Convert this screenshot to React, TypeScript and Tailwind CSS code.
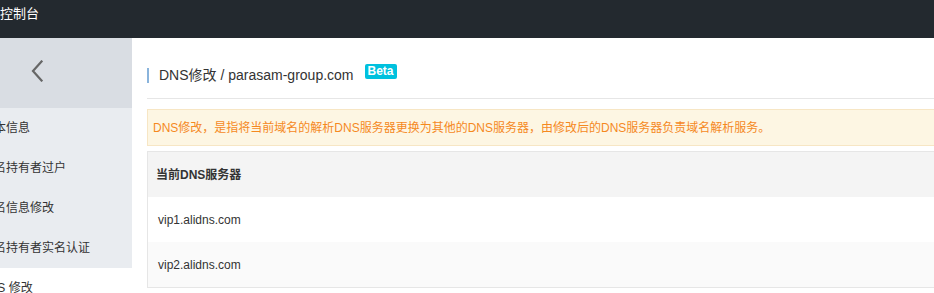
import React from "react";

const menu = ["基本信息", "域名持有者过户", "域名信息修改", "域名持有者实名认证"];

function Chevron() {
  return (
    <svg width="12" height="22" viewBox="0 0 12 22" fill="none">
      <path d="M10.5 1.5 L2 11 L10.5 20.5" stroke="#666" strokeWidth="2.2" strokeLinecap="square" />
    </svg>
  );
}

export default function App() {
  return (
    <div className="w-[934px] h-[293px] overflow-hidden bg-white font-['Liberation_Sans','Noto_Sans_CJK_SC',sans-serif] text-[#333]">
      {/* top bar */}
      <header className="h-[38px] bg-[#23292f] text-white text-[13px] leading-none pt-[7px]">控制台</header>

      <div className="flex">
        {/* sidebar */}
        <aside className="w-[132px] shrink-0 overflow-hidden">
          <div className="h-[70px] bg-[#d9dde3] flex items-center pl-[31px] pb-[5px]">
            <Chevron />
          </div>
          <ul className="bg-[#e9ecf0]">
            {menu.map((m) => (
              <li key={m} className="h-[40px] flex items-center text-[12px] whitespace-nowrap">
                <span className="-ml-[18px]">{m}</span>
              </li>
            ))}
          </ul>
          <div className="h-[40px] flex items-center text-[12px] whitespace-nowrap bg-white">
            <span className="-ml-[20px]">DNS 修改</span>
          </div>
        </aside>

        {/* main */}
        <main className="w-[900px] shrink-0 pl-[15px]">
          <div className="h-[61px] border-b border-[#e6e6e6] flex items-center pt-[14px]">
            <span className="border-l-2 border-[#8ab4dc] pl-[10px] h-[15px] leading-[15px] text-[14px] text-[#333]">
              DNS修改 / parasam-group.com
            </span>
            <span className="ml-[11px] mb-[7px] h-[15px] px-[3px] rounded-[2px] bg-[#00c1de] text-white text-[12px] font-bold leading-[15px]">
              Beta
            </span>
          </div>

          <div className="mt-[10px] h-[37px] border border-[#f7e6c4] bg-[#fdf6e3] flex items-center pl-[5px] text-[12px] text-[#f5891f] whitespace-nowrap">
            DNS修改，是指将当前域名的解析DNS服务器更换为其他的DNS服务器，由修改后的DNS服务器负责域名解析服务。
          </div>

          <div className="mt-[5px] border-l border-b border-[#e6e6e6] text-[12px]">
            <div className="h-[46px] bg-[#f4f4f4] border-t border-[#e6e6e6] flex items-center pl-[8px] font-bold text-[#333]">
              当前DNS服务器
            </div>
            <div className="h-[45px] bg-white flex items-center pl-[10px] text-[#333]">vip1.alidns.com</div>
            <div className="h-[45px] bg-[#fafafa] flex items-center pl-[10px] text-[#333]">vip2.alidns.com</div>
          </div>
        </main>
      </div>
    </div>
  );
}
